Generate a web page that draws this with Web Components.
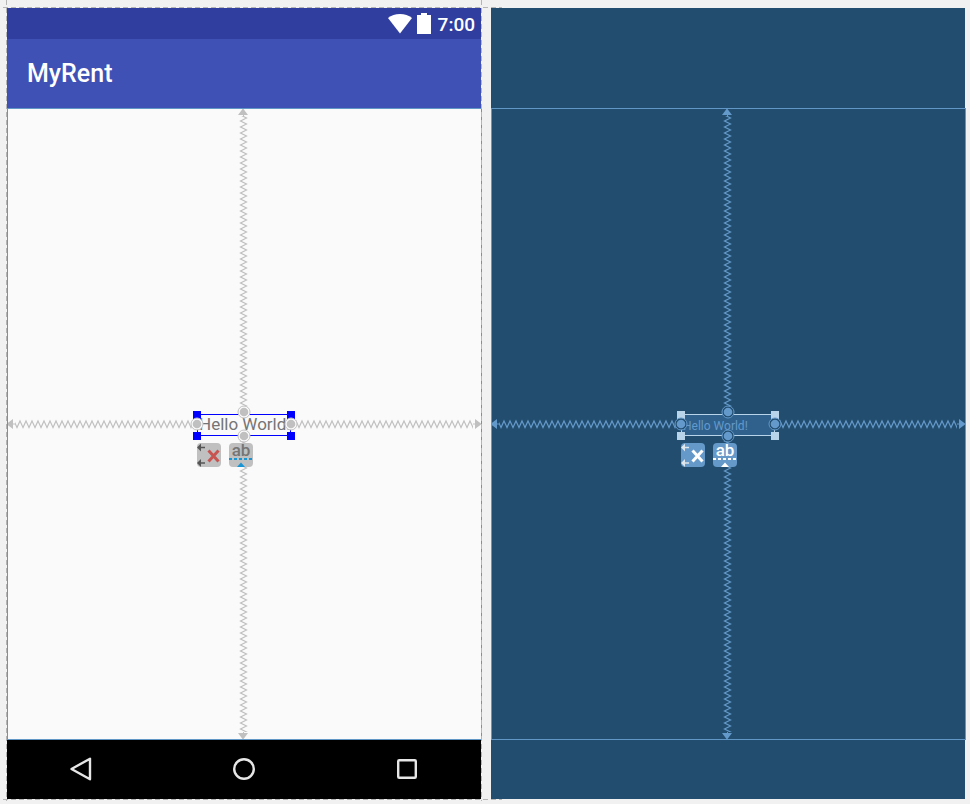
<!DOCTYPE html>
<html lang="en">
<head>
<meta charset="utf-8">
<title>MyRent layout editor</title>
<style>
  html, body { height: 100%; margin: 0; }
  body { background: #f1f1f1; font-family: Roboto, "Liberation Sans", sans-serif; }
</style>
</head>
<body>
<editor-surface>
  <device-preview>
    <status-bar slot="top">7:00</status-bar>
    <app-bar slot="top">MyRent</app-bar>
    <constraint-canvas><selected-widget>Hello World!</selected-widget></constraint-canvas>
    <nav-bar slot="bottom"></nav-bar>
  </device-preview>
  <device-blueprint>
    <constraint-canvas><selected-widget blueprint>Hello World!</selected-widget></constraint-canvas>
  </device-blueprint>
</editor-surface>

<script>
const define = (name, html, setup) => {
  const template = document.createElement('template');
  template.innerHTML = html;
  customElements.define(name, class extends HTMLElement {
    constructor() {
      super();
      this.attachShadow({ mode: 'open' }).append(template.content.cloneNode(true));
    }
    connectedCallback() { if (setup) setup(this); }
  });
};

define('editor-surface', `
<style>
  :host { display: grid; grid-template-columns: 1fr 1fr; gap: 10px; box-sizing: border-box;
    min-height: 100vh; padding: 8px 5px 5px 7px; overflow: hidden; }
</style>
<slot></slot>`);

define('device-preview', `
<style>
  :host { position: relative; display: flex; flex-direction: column; background: #fafafa;
    --line: #6197c6; --spring: #c0c0c0; --ring: #fafafa; --ring-edge: #c2c2c2;
    --box: #0000ff; --handle: #0000ff; --fill: transparent;
    --label: #757575; --button: #c0c0c0; --glyph: #555555; --cross: #c75450;
    --ab: #757575; --accent: #1795d4; }
  .guide { position: absolute; pointer-events: none; }
  .h { left: -4px; right: -21px; height: 1px;
    background: repeating-linear-gradient(90deg, #b5b5b5 0 5px, transparent 5px 8px); }
  .v { top: -8px; bottom: -2px; width: 1px;
    background: repeating-linear-gradient(#b5b5b5 0 5px, transparent 5px 8px); }
  .t { top: -1px; } .b { bottom: -1px; } .l { left: -1px; } .r { right: -1px; }
</style>
<slot name="top"></slot>
<slot></slot>
<slot name="bottom"></slot>
<div class="guide h t"></div><div class="guide h b"></div>
<div class="guide v l"></div><div class="guide v r"></div>`);

define('device-blueprint', `
<style>
  :host { display: flex; flex-direction: column; padding: 100px 0 59px; background: #224d6e;
    --line: #6197c6; --spring: #6499cb; --ring: #224d6e; --ring-edge: #6499cb;
    --box: #b8d4ea; --handle: #b8d4ea; --fill: #2f618c;
    --label: #6499cb; --button: #6499c9; --glyph: #dfe6ec; --cross: #ffffff;
    --ab: #ffffff; --accent: #ffffff; }
</style>
<slot></slot>`);

define('status-bar', `
<style>
  :host { display: flex; align-items: center; justify-content: flex-end; gap: 5px; height: 31px;
    box-sizing: border-box; padding: 0 6px 0 0; background: #303f9f; color: #fff; }
  .time { font-size: 19px; line-height: 24px; font-weight: 500; padding: 3px 0 0 2px; }
</style>
<svg width="24" height="20" viewBox="0 0 24 20"><path d="M0 4Q5 0 12 0T24 4L12 19.5Z" fill="#fff"/></svg>
<svg width="14" height="21" viewBox="0 0 14 21"><path d="M4 0H10V2H14V21H0V2H4Z" fill="#fff"/></svg>
<span class="time"><slot></slot></span>`);

define('app-bar', `
<style>
  :host { display: flex; align-items: center; height: 69px; padding: 0 20px; background: #3f51b5; color: #fff; }
  h1 { margin: 0; font-size: 25px; line-height: 32px; font-weight: 500; }
</style>
<h1><slot></slot></h1>`);

define('nav-bar', `
<style>
  :host { display: flex; align-items: flex-start; justify-content: space-between; height: 54px;
    padding: 5px 50px 0; background: #000; }
  button { display: grid; place-items: center; width: 48px; height: 48px; padding: 0; border: 0; background: none; }
  svg { fill: none; stroke: #e6e6e6; stroke-width: 2.4; stroke-linejoin: round; }
</style>
<button aria-label="Back"><svg width="24" height="24"><path d="M2.500 12L21 1.700V22.300Z"/></svg></button>
<button aria-label="Home"><svg width="24" height="24"><circle cx="12" cy="12" r="9.800"/></svg></button>
<button aria-label="Overview"><svg width="24" height="24"><rect x="3.200" y="3.200" width="17.600" height="17.600" rx="1"/></svg></button>`);

/* A spring with an arrow head at the parent edge that it is pinned to. */
define('constraint-spring', `
<style>
  :host { display: flex; min-width: 0; min-height: 0; }
  svg { display: block; flex: none; }
  .coil { flex: 1 1 0; min-width: 0; min-height: 0; }
  .head path { fill: var(--spring); }
  pattern path { fill: none; stroke: var(--spring); stroke-width: 1.2; }
</style>
<div id="root" style="display:contents"></div>`, host => {
  const side = host.getAttribute('side');
  const shapes = {
    up: [12, 7, 'M4.500 0H5.500L10 6H0Z M5 6h1v1h-1z'],
    down: [12, 7, 'M4.500 7H5.500L10 1H0Z M5 0h1v1h-1z'],
    left: [8, 12, 'M0 5.500V6.500L6 11V1Z M6 5.500h2v1h-2z'],
    right: [8, 12, 'M8 5.500V6.500L2 11V1Z M0 5.500h2v1h-2z']
  };
  const [w, h, d] = shapes[side];
  const vertical = side === 'up' || side === 'down';
  const head = `<svg class="head" width="${w}" height="${h}"><path d="${d}"/></svg>`;
  const coil = vertical
    ? `<svg class="coil" width="12" height="0"><defs><pattern id="z" width="12" height="6" patternUnits="userSpaceOnUse"><path d="M2.500 -1L8.500 2L2.500 5L8.500 8"/></pattern></defs><rect width="100%" height="100%" fill="url(#z)"/></svg>`
    : `<svg class="coil" width="0" height="12"><defs><pattern id="z" width="6" height="12" patternUnits="userSpaceOnUse"><path d="M-1 3L2 9.500L5 3L8 9.500"/></pattern></defs><rect width="100%" height="100%" fill="url(#z)"/></svg>`;
  host.style.flexDirection = vertical ? 'column' : 'row';
  host.shadowRoot.getElementById('root').innerHTML =
    side === 'up' || side === 'left' ? head + coil : coil + head;
});

define('constraint-canvas', `
<style>
  :host { position: relative; flex: 1; display: grid; grid-template-columns: 1fr 94px 1fr;
    grid-template-rows: 1fr 24px 1fr; place-items: stretch; }
  :host::before { content: ""; position: absolute; inset: 0 -1px 0 0; border: 1px solid var(--line); pointer-events: none; }
  [side=up] { grid-area: 1 / 2; justify-self: center; padding-top: 1px; }
  [side=down] { grid-area: 3 / 2; justify-self: center; padding-bottom: 1px; }
  [side=left] { grid-area: 2 / 1; align-self: center; }
  [side=right] { grid-area: 2 / 3; align-self: center; }
  .item { grid-area: 2 / 2; align-self: end; position: relative; }
</style>
<constraint-spring side="up"></constraint-spring>
<constraint-spring side="left"></constraint-spring>
<constraint-spring side="right"></constraint-spring>
<constraint-spring side="down"></constraint-spring>
<div class="item"><slot></slot></div>`);

define('selected-widget', `
<style>
  :host { display: block; position: relative; box-sizing: border-box; height: 22px;
    border: 1px solid var(--box); background: var(--fill); color: var(--label); }
  .text { display: block; padding-left: 1px; font-size: 17px; line-height: 19px; white-space: nowrap; }
  :host([blueprint]) .text { font-size: 12px; line-height: 22px; }
  .grip { position: absolute; width: 8px; height: 8px; background: var(--handle); }
  .tl, .bl { left: -5px; } .tr, .br { right: -5px; }
  .tl, .tr { top: -4px; } .bl, .br { bottom: -5px; }
  .anchor { position: absolute; }
  .anchor circle:first-child { fill: var(--ring); stroke: var(--ring-edge); }
  .anchor circle:last-child { fill: var(--spring); }
  .n { left: 40px; top: -9px; } .s { left: 40px; bottom: -7px; }
  .w { left: -7px; top: 3px; } .e { right: -7px; top: 3px; }
  .tools { position: absolute; top: 28px; left: -1px; display: flex; gap: 8px; }
  button { display: grid; width: 24px; height: 24px; padding: 0; border: 0;
    border-radius: 4px; background: var(--button); font-family: inherit; }
  button > * { grid-area: 1 / 1; }
  button svg { display: block; fill: none; }
  .ab { justify-self: center; align-self: start; font-size: 17px; line-height: 15px; font-weight: 500; color: var(--ab); }
</style>
<span class="text"><slot></slot></span>
<i class="grip tl"></i><i class="grip tr"></i><i class="grip bl"></i><i class="grip br"></i>
${['n', 's', 'w', 'e'].map(p => `<svg class="anchor ${p}" width="12" height="12" overflow="visible"><circle cx="6" cy="6" r="6"/><circle cx="6" cy="6" r="4.300"/></svg>`).join('')}
<div class="tools">
  <button aria-label="Delete constraints"><svg width="24" height="24">
    <path d="M0 4.500L4 .500V3.700H8V5.200H4V8.500ZM0 20L4 16V19.200H8V20.700H4V24Z" style="fill:var(--glyph)"/>
    <path d="M11.500 7.500L21.500 18.500M21.500 7.500L11.500 18.500" style="stroke:var(--cross);stroke-width:3"/>
  </svg></button>
  <button aria-label="Edit baseline"><span class="ab">ab</span><svg width="24" height="24">
    <path d="M0 16H24" style="stroke:var(--accent);stroke-width:2;stroke-dasharray:3 2"/>
    <path d="M8 24L12 19.500L16 24Z" style="fill:var(--accent)"/>
  </svg></button>
</div>`);
</script>
</body>
</html>
